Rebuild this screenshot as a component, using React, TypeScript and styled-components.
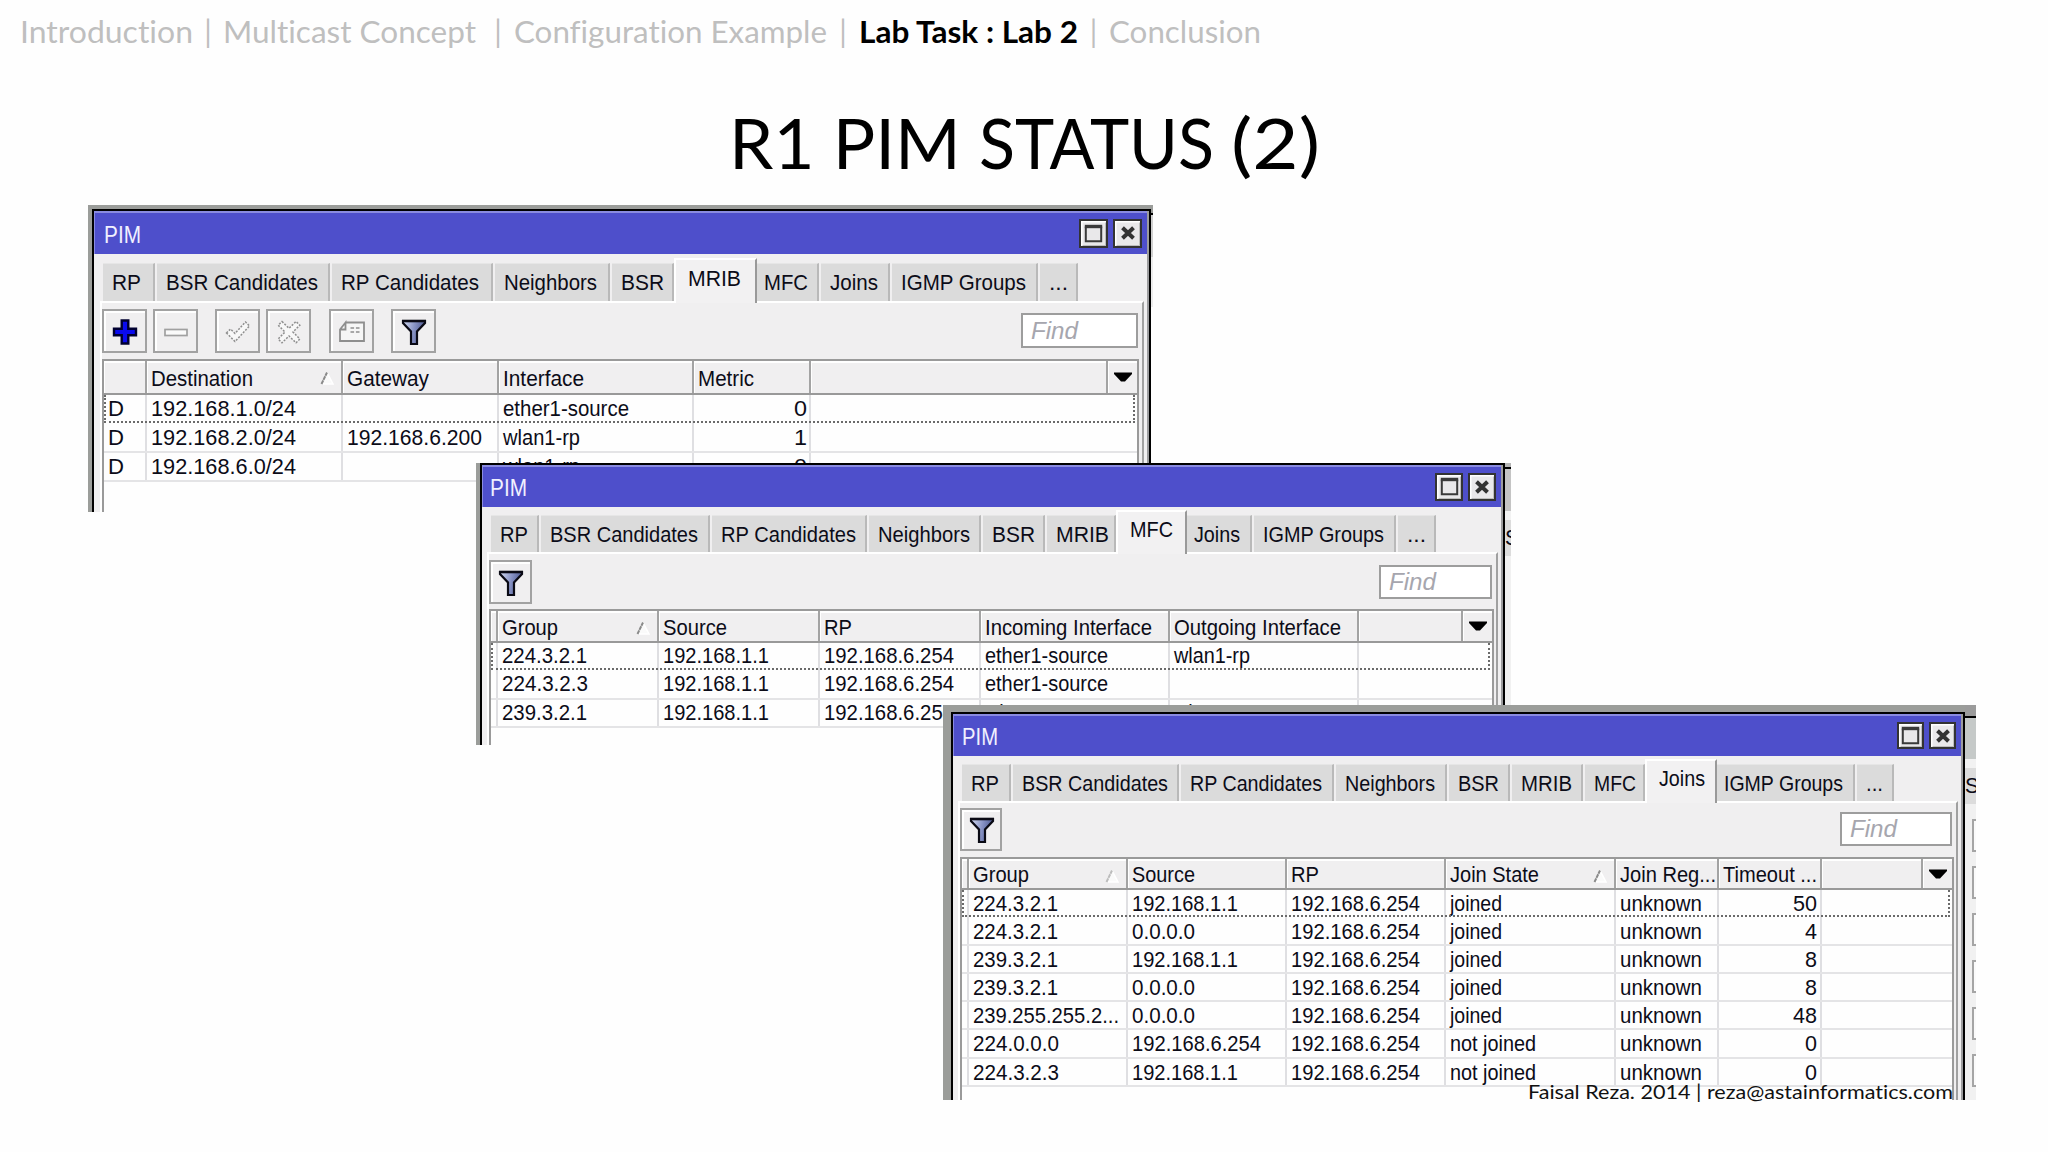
import React, { useLayoutEffect, useRef, useState } from 'react';
import styled, { createGlobalStyle, css } from 'styled-components';

const GlobalStyle = createGlobalStyle`
  * { box-sizing: border-box; }
  html, body { margin: 0; padding: 0; background: #fefefe; }
`;

/* ---------- text condensed to a given width ---------- */

const FitBox = styled.span`
  display: inline-block;
  flex: none;
  white-space: pre;
`;

const FitInner = styled.span`
  display: inline-block;
  transform-origin: 0 50%;
  white-space: pre;
`;

function Fit({ w, children }: { w: number; children: string }) {
  const ref = useRef<HTMLSpanElement>(null);
  const [scale, setScale] = useState(1);
  useLayoutEffect(() => {
    if (ref.current) {
      const natural = ref.current.getBoundingClientRect().width;
      if (natural > 0) setScale(w / natural);
    }
  }, []);
  return (
    <FitBox style={{ width: w }}>
      <FitInner ref={ref} style={{ transform: scale === 1 ? undefined : `scaleX(${scale})` }}>
        {children}
      </FitInner>
    </FitBox>
  );
}

/* ---------- slide ---------- */

const Slide = styled.div`
  position: relative;
  width: 2048px;
  height: 1152px;
  overflow: hidden;
  background: #fefefe;
  font-family: Lato, 'Open Sans', sans-serif;
  font-variant-ligatures: none;
`;

const Crumbs = styled.nav`
  display: flex;
  height: 64px;
  padding-left: 20px;
  font-size: 30px;
  line-height: 62px;
  color: #bfbfbf;
`;

const Crumb = styled.span<{ $current?: boolean }>`
  ${(p) => p.$current && css`
    color: #000;
    font-weight: 700;
  `}
`;

const Divider = styled.span<{ $w: number; $gap?: number }>`
  width: ${(p) => p.$w}px;
  margin-left: ${(p) => p.$gap ?? 0}px;
  text-align: center;
`;

const Title = styled.h1`
  display: flex;
  justify-content: center;
  margin: 0;
  height: 160px;
  font-size: 70.5px;
  font-weight: 400;
  line-height: 155px;
  color: #000;
`;

const Footer = styled.footer`
  position: absolute;
  left: 1528px;
  top: 1077px;
  height: 28px;
  font-size: 20px;
  line-height: 28px;
  color: #111;
`;

/* ---------- window ---------- */

const Shot = styled.section<{ $x: number; $y: number; $w: number; $h: number; $l: number }>`
  position: absolute;
  left: ${(p) => p.$x}px;
  top: ${(p) => p.$y}px;
  width: ${(p) => p.$w}px;
  height: ${(p) => p.$h}px;
  padding: 0 0 0 ${(p) => p.$l}px;
  display: flex;
  overflow: hidden;
  background: #9b9d9a;
  font-family: 'Liberation Sans', Arial, sans-serif;
  font-size: 22px;
  color: #0c0c18;
`;

const Frame = styled.div<{ $t: number }>`
  flex: 1;
  min-width: 0;
  margin-top: ${(p) => p.$t}px;
  display: flex;
  flex-direction: column;
  border: 2px solid #000;
  border-bottom: 0;
  background: #f0eff0;
  box-shadow: inset -2px 0 0 #9c9c9e;
`;

const TitleBar = styled.header<{ $h: number; $l: number }>`
  flex: none;
  height: ${(p) => p.$h}px;
  margin-right: 2px;
  padding: 1px 5px 0 ${(p) => p.$l}px;
  display: flex;
  align-items: center;
  justify-content: space-between;
  background: #4e4fcb;
  border-top: 2px solid #8a8be0;
  border-left: 1px solid #8a8be0;
  color: #f0f0ff;
  font-size: 23.5px;
`;

const TitleText = styled.div`
  padding-top: 2px;
`;

const WinButtons = styled.div<{ $gap: number }>`
  display: flex;
  gap: ${(p) => p.$gap}px;
  margin-top: -2px;
`;

const WinButton = styled.span<{ $s: number }>`
  width: ${(p) => p.$s}px;
  height: ${(p) => p.$s}px;
  display: flex;
  align-items: center;
  justify-content: center;
  border: 2px solid #333;
  background: #e9e8ea;
  box-shadow: inset 1.5px 1.5px 0 #fff, inset -1px -1px 0 #bdbdbd;
`;

const Tabs = styled.div<{ $h: number; $l: number }>`
  flex: none;
  height: ${(p) => p.$h}px;
  padding-left: ${(p) => p.$l}px;
  display: flex;
  align-items: flex-end;
`;

const TabSlot = styled.div<{ $w: number; $gap: number }>`
  flex: none;
  width: ${(p) => p.$w}px;
  padding-right: ${(p) => p.$gap}px;
`;

const TabBox = styled.div<{ $h: number; $pad: number; $active: boolean }>`
  height: ${(p) => p.$h}px;
  padding: 1px 0 0 ${(p) => p.$pad}px;
  line-height: ${(p) => p.$h - 2}px;
  background: #dbdbdb;
  border-right: 2px solid #b9b9b9;
  border-top: 1px solid #e6e6e6;
  ${(p) => p.$active && css`
    padding-top: 0;
    background: #f2f1f2;
    border-right-color: #999;
    border-top: 2px solid #fff;
    border-left: 2px solid #fff;
    margin-bottom: -2px;
    height: ${p.$h + 7}px;
    line-height: ${p.$h - 1}px;
    position: relative;
  `}
`;

const Panel = styled.div<{ $l: number; $r: number }>`
  flex: 1;
  margin: 0 ${(p) => p.$r}px 0 ${(p) => p.$l}px;
  display: flex;
  flex-direction: column;
  border-top: 2px solid #fff;
  border-left: 2px solid #fff;
  border-right: 2px solid #a0a0a0;
`;

const Toolbar = styled.div<{ $h: number; $b: number }>`
  flex: none;
  height: ${(p) => p.$h}px;
  padding: 0 4px ${(p) => p.$b}px 0;
  display: flex;
  align-items: flex-end;
`;

const ToolButton = styled.span<{ $gap: number; $w: number; $h: number }>`
  width: ${(p) => p.$w}px;
  height: ${(p) => p.$h}px;
  margin-left: ${(p) => p.$gap}px;
  padding: 1px 0 0 1px;
  display: flex;
  align-items: center;
  justify-content: center;
  border: 2px solid #a2a2a2;
  background: #f0eff0;
  box-shadow: inset 2px 2px 0 #fff;
`;

const Find = styled.div<{ $w: number; $h: number }>`
  width: ${(p) => p.$w}px;
  height: ${(p) => p.$h}px;
  margin: 0 0 5px auto;
  padding-left: 8px;
  border: 2px solid #9d9d9d;
  background: #fff;
  color: #a6a6ae;
  font-style: italic;
  font-size: 23.5px;
  line-height: ${(p) => p.$h - 3}px;
`;

const Grid = styled.div<{ $r: number }>`
  flex: 1;
  margin-right: ${(p) => p.$r}px;
  display: flex;
  flex-direction: column;
  border: 2px solid #9a9a9a;
  border-bottom: 0;
  background: #fefefe;
`;

const HeadRow = styled.div<{ $h: number }>`
  flex: none;
  height: ${(p) => p.$h}px;
  display: flex;
  border-bottom: 2px solid #999;
  background: #f0eff0;
`;

const HeadCell = styled.div<{ $w: number; $h: number; $sortable: boolean }>`
  flex: none;
  width: ${(p) => p.$w}px;
  padding: 2px ${(p) => (p.$sortable ? 7 : 0)}px 0 ${(p) => (p.$w < 20 ? 0 : 4)}px;
  display: flex;
  align-items: flex-start;
  justify-content: space-between;
  line-height: ${(p) => p.$h - 3}px;
  border-right: 2px solid #a3a3a3;
  box-shadow: inset 1px 2px 0 #fff;
  white-space: nowrap;
  overflow: hidden;
`;

const MenuCell = styled.div`
  flex: 1;
  display: flex;
  align-items: center;
  justify-content: center;
  box-shadow: inset 1px 2px 0 #fff;
`;

const Row = styled.div<{ $h: number; $trim: number; $focus: boolean }>`
  flex: none;
  position: relative;
  height: ${(p) => p.$h}px;
  display: flex;
  border-bottom: ${(p) => (p.$focus ? '0' : '2px solid #e4e4e6')};
  line-height: ${(p) => p.$h - p.$trim}px;
  ${(p) => p.$focus && css`
    &::after {
      content: '';
      position: absolute;
      inset: 0 2px 1px 0;
      border: 2px dotted #6a6a6a;
      border-top: 0;
    }
  `}
`;

const Cell = styled.div<{ $w: number; $right?: boolean }>`
  flex: none;
  width: ${(p) => p.$w}px;
  padding: 0 ${(p) => (p.$w < 20 ? 0 : 3)}px 0 ${(p) => (p.$w < 20 ? 0 : 4)}px;
  border-right: 2px solid #dfdfe2;
  text-align: ${(p) => (p.$right ? 'right' : 'left')};
  overflow: hidden;
`;

const Strip = styled.div<{ $w: number }>`
  flex: none;
  width: ${(p) => p.$w}px;
  display: flex;
  flex-direction: column;
  overflow: hidden;
  background: #f1f1f1;
`;

const Band = styled.div<{ $h: number; $c: string }>`
  flex: none;
  height: ${(p) => p.$h}px;
  line-height: ${(p) => p.$h}px;
  background: ${(p) => p.$c};
`;

const Stub = styled.div`
  flex: none;
  height: 33px;
  margin: 0 0 14px 7px;
  border: 2px solid #a5a5a5;
  border-right: 0;
  background: #fafafa;
`;

const StubList = styled.div`
  display: flex;
  flex-direction: column;
  padding-top: 15px;
`;

/* ---------- icons ---------- */

const Funnel = () => (
  <svg width="26" height="28" viewBox="0 0 26 28">
    <defs>
      <linearGradient id="fun" x1="0" x2="1" y1="0" y2="0.2">
        <stop offset="0" stopColor="#d5dcf2" />
        <stop offset="0.55" stopColor="#8792c4" />
        <stop offset="1" stopColor="#4e5a92" />
      </linearGradient>
    </defs>
    <path d="M2 3H24V5L16 13.5V26H10V13.5L2 5Z" fill="url(#fun)" stroke="#0a0a14" strokeWidth="2.2" />
    <path d="M1 3H25" stroke="#0a0a14" strokeWidth="2.6" />
  </svg>
);

const Plus = () => (
  <svg width="26" height="26" viewBox="0 0 26 26">
    <path d="M9.7 1.5H16.3V9.7H24V16.3H16.3V24.5H9.7V16.3H2V9.7H9.7Z" fill="#0a0af0" stroke="#000030" strokeWidth="2.4" />
  </svg>
);

const Minus = () => (
  <svg width="26" height="26" viewBox="0 0 26 26">
    <rect x="2" y="10.5" width="22" height="6" fill="#fafafa" stroke="#a0a0a0" strokeWidth="1.7" />
  </svg>
);

const Check = () => (
  <svg width="26" height="26" viewBox="0 0 26 26">
    <path d="M1.5 14L5.5 10L10 14.5L20.5 3L24.5 7L10 22.5Z" fill="#f8f8f8" stroke="#8e8e8e" strokeWidth="1.5" strokeDasharray="2 1.4" />
  </svg>
);

const Cross = () => (
  <svg width="26" height="26" viewBox="0 0 26 26">
    <path d="M6 2.5L13 9.3L20 2.5L23.8 6.2L17 13L23.8 20L20 23.8L13 17L6 23.8L2.2 20L9 13L2.2 6.2Z" fill="#f8f8f8" stroke="#8e8e8e" strokeWidth="1.5" strokeDasharray="2 1.4" />
  </svg>
);

const Card = () => (
  <svg width="28" height="26" viewBox="0 0 28 26">
    <path d="M7.5 3.5H26V22H2V10.5L7.5 3.5V10.5H2" fill="#f6f6f6" stroke="#8e8e8e" strokeWidth="1.8" />
    <path d="M12.5 9H22M12.5 13H22" stroke="#8e8e8e" strokeWidth="1.6" strokeDasharray="3.6 1.8" />
  </svg>
);

const SortMark = ({ faint }: { faint?: boolean }) => (
  <svg width="14" height="32" viewBox="0 0 14 32">
    <path d="M7 9.5L13 21H1.5Z" fill="#fafafa" />
    <path d="M7 9.5L13 21H2.5" fill="none" stroke="#fff" strokeWidth="1.6" />
    <path d="M1.5 21L7 9.5" stroke={faint ? '#bcbcbc' : '#8a8a8a'} strokeWidth="2" strokeDasharray="4 0.6" />
  </svg>
);

const DownArrow = () => (
  <svg width="18" height="10" viewBox="0 0 18 10">
    <path d="M0 0.5H18V2L11 9.5H7L0 2Z" fill="#000" />
  </svg>
);

const MaxIcon = () => (
  <svg width="19" height="19" viewBox="0 0 19 19">
    <path d="M1.8 2.5V17.2H17.2V2.5" fill="none" stroke="#3a3a3a" strokeWidth="2" />
    <path d="M0.8 2.5H18.2" stroke="#3a3a3a" strokeWidth="3.4" />
  </svg>
);

const CloseIcon = () => (
  <svg width="16" height="16" viewBox="0 0 16 16">
    <path d="M2.5 2.8L13.5 13.2M13.5 2.8L2.5 13.2" stroke="#333" strokeWidth="4" />
  </svg>
);

/* ---------- data ---------- */

type T = [string, number];
type Col = { w: number; head?: T; sort?: 'on' | 'faint'; right?: boolean };
type WinSpec = {
  x: number; y: number; w: number; h: number; l: number; t: number; strip: number;
  titleH: number; titleL: number; pimW: number; btn: number;
  tabsH: number; tabsL: number; tabH: number; active: number; tabs: [string, number, number][];
  panelL: number; panelR: number;
  toolH: number; toolB: number; bw: number; bh: number; findW: number; findH: number;
  gridR: number; headH: number; rowH: number; trim: number; cols: Col[]; rows: (T | null)[][];
  full?: boolean;
};

const ip: Record<string, T> = {
  a: ['192.168.6.254', 130],
  b: ['192.168.1.1', 106],
};

const mrib: WinSpec = {
  x: 88, y: 205, w: 1065, h: 307, l: 4, t: 4, strip: 2,
  titleH: 43, titleL: 9, pimW: 37, btn: 29,
  tabsH: 47, tabsL: 9, tabH: 38, active: 5,
  tabs: [['RP', 54, 29], ['BSR Candidates', 175, 152], ['RP Candidates', 163, 138], ['Neighbors', 117, 93], ['BSR', 62, 43], ['MRIB', 83, 53], ['MFC', 64, 44], ['Joins', 71, 48], ['IGMP Groups', 148, 125], ['...', 40, 19]],
  panelL: 6, panelR: 5,
  toolH: 56, toolB: 6, bw: 45, bh: 44, findW: 117, findH: 35,
  gridR: 3, headH: 34, rowH: 29, trim: 2,
  cols: [
    { w: 43 }, { w: 196, head: ['Destination', 102], sort: 'on' }, { w: 156, head: ['Gateway', 82] },
    { w: 195, head: ['Interface', 81] }, { w: 117, head: ['Metric', 56], right: true }, { w: 297 },
  ],
  rows: [
    [['D', 16], ['192.168.1.0/24', 145], null, ['ether1-source', 126], ['0', 13]],
    [['D', 16], ['192.168.2.0/24', 145], ['192.168.6.200', 135], ['wlan1-rp', 77], ['1', 13]],
    [['D', 16], ['192.168.6.0/24', 145], null, ['wlan1-rp', 77], ['0', 13]],
  ],
  full: true,
};

const mfc: WinSpec = {
  x: 476, y: 463, w: 1035, h: 282, l: 4, t: 0, strip: 6,
  titleH: 42, titleL: 7, pimW: 37, btn: 28,
  tabsH: 45, tabsL: 9, tabH: 37, active: 6,
  tabs: [['RP', 50, 28], ['BSR Candidates', 171, 148], ['RP Candidates', 157, 135], ['Neighbors', 114, 92], ['BSR', 64, 43], ['MRIB', 69, 53], ['MFC', 71, 43], ['Joins', 67, 46], ['IGMP Groups', 144, 121], ['...', 40, 19]],
  panelL: 5, panelR: 5,
  toolH: 55, toolB: 5, bw: 43, bh: 44, findW: 113, findH: 34,
  gridR: 2, headH: 32, rowH: 28.3, trim: 1.6,
  cols: [
    { w: 7 }, { w: 161, head: ['Group', 56], sort: 'on' }, { w: 161, head: ['Source', 64] }, { w: 161, head: ['RP', 28] },
    { w: 189, head: ['Incoming Interface', 167] }, { w: 189, head: ['Outgoing Interface', 167] }, { w: 104 },
  ],
  rows: [
    [null, ['224.3.2.1', 85], ip.b, ip.a, ['ether1-source', 123], ['wlan1-rp', 76]],
    [null, ['224.3.2.3', 86], ip.b, ip.a, ['ether1-source', 123], null],
    [null, ['239.3.2.1', 85], ip.b, ip.a, ['wlan1-rp', 76], ['wlan1-rp', 76]],
  ],
};

const no: T = ['not joined', 86];
const jo: T = ['joined', 52];
const un: T = ['unknown', 82];
const z: T = ['0.0.0.0', 63];
const g1: T = ['224.3.2.1', 85];
const g2: T = ['239.3.2.1', 85];
const ipj: T = ['192.168.6.254', 129];

const joins: WinSpec = {
  x: 943, y: 705, w: 1033, h: 395, l: 8, t: 7, strip: 11,
  titleH: 42, titleL: 8, pimW: 36, btn: 27,
  tabsH: 45, tabsL: 9, tabH: 37, active: 7,
  tabs: [['RP', 51, 28], ['BSR Candidates', 168, 146], ['RP Candidates', 155, 132], ['Neighbors', 113, 90], ['BSR', 63, 41], ['MRIB', 73, 51], ['MFC', 60, 42], ['Joins', 72, 46], ['IGMP Groups', 140, 119], ['...', 39, 17]],
  panelL: 5, panelR: 5,
  toolH: 54, toolB: 6, bw: 42, bh: 43, findW: 112, findH: 34,
  gridR: 2, headH: 31, rowH: 28.1, trim: 0.4,
  cols: [
    { w: 7 }, { w: 159, head: ['Group', 56], sort: 'faint' }, { w: 159, head: ['Source', 63] }, { w: 159, head: ['RP', 28] },
    { w: 170, head: ['Join State', 89], sort: 'on' }, { w: 103, head: ['Join Reg...', 96] },
    { w: 103, head: ['Timeout ...', 94], right: true }, { w: 101 },
  ],
  rows: [
    [null, g1, ip.b, ipj, jo, un, ['50', 24]],
    [null, g1, z, ipj, jo, un, ['4', 12]],
    [null, g2, ip.b, ipj, jo, un, ['8', 12]],
    [null, g2, z, ipj, jo, un, ['8', 12]],
    [null, ['239.255.255.2...', 146], z, ipj, jo, un, ['48', 24]],
    [null, ['224.0.0.0', 86], ipj, ipj, no, un, ['0', 12]],
    [null, ['224.3.2.3', 86], ip.b, ipj, no, un, ['0', 12]],
  ],
};

/* ---------- window component ---------- */

const tabPad = (i: number, active: number) => {
  if (i === active) return 12;
  if (i === active + 1) return 7;
  return 9;
};

function PimWindow({ s, children }: { s: WinSpec; children?: React.ReactNode }) {
  const tool = { $w: s.bw, $h: s.bh };
  return (
    <Shot $x={s.x} $y={s.y} $w={s.w} $h={s.h} $l={s.l}>
      <Frame $t={s.t}>
        <TitleBar $h={s.titleH} $l={s.titleL}>
          <TitleText><Fit w={s.pimW}>PIM</Fit></TitleText>
          <WinButtons $gap={5}>
            <WinButton $s={s.btn}><MaxIcon /></WinButton>
            <WinButton $s={s.btn}><CloseIcon /></WinButton>
          </WinButtons>
        </TitleBar>
        <Tabs $h={s.tabsH} $l={s.tabsL}>
          {s.tabs.map(([label, w, tw], i) => (
            <TabSlot key={label} $w={w} $gap={i === s.active || i === s.active - 1 ? 0 : 2}>
              <TabBox $h={s.tabH} $pad={tabPad(i, s.active)} $active={i === s.active}>
                <Fit w={tw}>{label}</Fit>
              </TabBox>
            </TabSlot>
          ))}
        </Tabs>
        <Panel $l={s.panelL} $r={s.panelR}>
          <Toolbar $h={s.toolH} $b={s.toolB}>
            {s.full && (
              <>
                <ToolButton {...tool} $gap={0}><Plus /></ToolButton>
                <ToolButton {...tool} $gap={6}><Minus /></ToolButton>
                <ToolButton {...tool} $gap={17}><Check /></ToolButton>
                <ToolButton {...tool} $gap={6}><Cross /></ToolButton>
                <ToolButton {...tool} $gap={18}><Card /></ToolButton>
              </>
            )}
            <ToolButton {...tool} $gap={s.full ? 17 : 0}><Funnel /></ToolButton>
            <Find $w={s.findW} $h={s.findH}><Fit w={47}>Find</Fit></Find>
          </Toolbar>
          <Grid $r={s.gridR}>
            <HeadRow $h={s.headH}>
              {s.cols.map((c, i) => (
                <HeadCell key={i} $w={c.w} $h={s.headH} $sortable={!!c.sort}>
                  {c.head ? <Fit w={c.head[1]}>{c.head[0]}</Fit> : null}
                  {c.sort && <SortMark faint={c.sort === 'faint'} />}
                </HeadCell>
              ))}
              <MenuCell><DownArrow /></MenuCell>
            </HeadRow>
            {s.rows.map((r, ri) => (
              <Row key={ri} $h={s.rowH} $trim={s.trim} $focus={ri === 0}>
                {r.map((cell, ci) => (
                  <Cell key={ci} $w={s.cols[ci].w} $right={s.cols[ci].right}>
                    {cell && <Fit w={cell[1]}>{cell[0]}</Fit>}
                  </Cell>
                ))}
              </Row>
            ))}
          </Grid>
        </Panel>
      </Frame>
      <Strip $w={s.strip}>{children}</Strip>
    </Shot>
  );
}

export default function App() {
  return (
    <Slide>
      <GlobalStyle />
      <Crumbs>
        <Crumb><Fit w={173}>Introduction</Fit></Crumb>
        <Divider $w={30}>|</Divider>
        <Crumb><Fit w={253}>Multicast Concept</Fit></Crumb>
        <Divider $w={32} $gap={6}>|</Divider>
        <Crumb><Fit w={313}>Configuration Example</Fit></Crumb>
        <Divider $w={32}>|</Divider>
        <Crumb $current><Fit w={219}>Lab Task : Lab 2</Fit></Crumb>
        <Divider $w={31}>|</Divider>
        <Crumb><Fit w={152}>Conclusion</Fit></Crumb>
      </Crumbs>
      <Title>
        <Fit w={250}>{'R1 PIM '}</Fit>
        <Fit w={252}>{'STATUS '}</Fit>
        <Fit w={89}>(2)</Fit>
      </Title>
      <PimWindow s={mrib}>
        <Band $h={8} $c="#9b9d9a" />
        <Band $h={2} $c="#000" />
        <Band $h={42} $c="#d0d0d0" />
        <Band $h={50} $c="#ececec" />
        <Band $h={205} $c="#fefefe" />
      </PimWindow>
      <PimWindow s={mfc}>
        <Band $h={4} $c="#b5b5b5" />
        <Band $h={2} $c="#000" />
        <Band $h={42} $c="#c4c4c4" />
        <Band $h={9} $c="#f2f2f2" />
        <Band $h={36} $c="#dcdcdc"><Fit w={14}>S</Fit></Band>
      </PimWindow>
      <PimWindow s={joins}>
        <Band $h={11} $c="#9b9b9b" />
        <Band $h={2} $c="#000" />
        <Band $h={41} $c="#c5c9c8" />
        <Band $h={9} $c="#f2f2f2" />
        <Band $h={36} $c="#dcdcdc"><Fit w={14}>S</Fit></Band>
        <StubList>
          {[0, 1, 2, 3, 4, 5].map((i) => <Stub key={i} />)}
        </StubList>
      </PimWindow>
      <Footer><Fit w={425}>Faisal Reza. 2014 | reza@astainformatics.com</Fit></Footer>
    </Slide>
  );
}
